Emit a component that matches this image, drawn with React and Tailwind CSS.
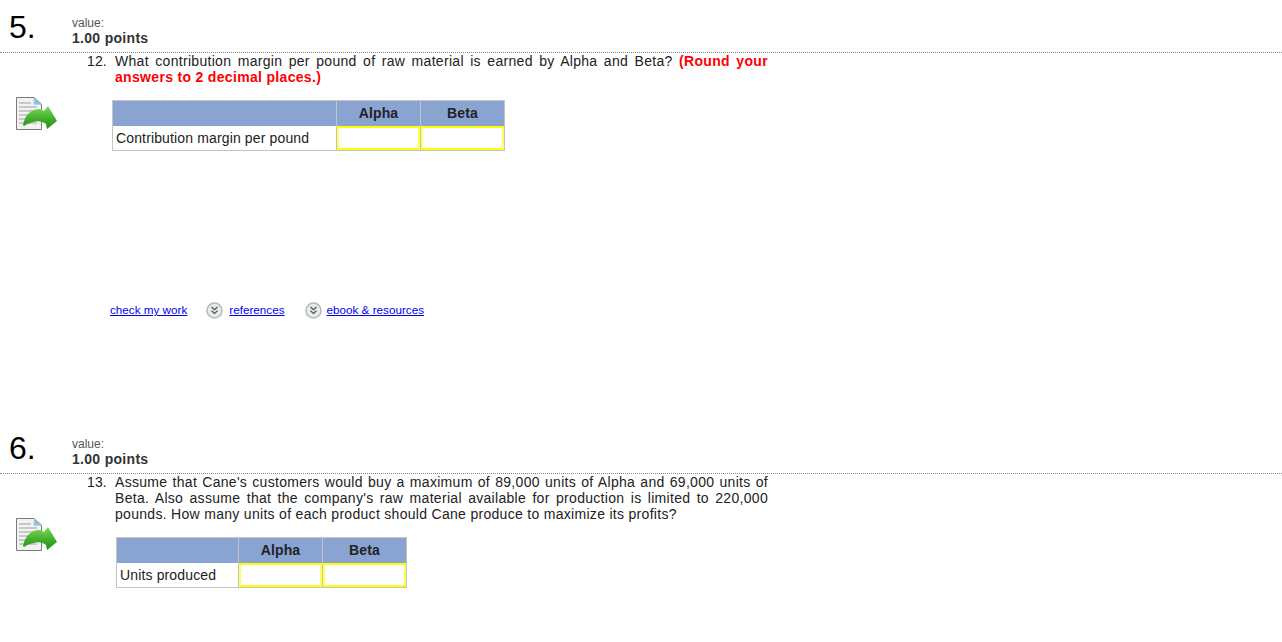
const FileIcon = () => (
  <svg width="42" height="34" viewBox="0 0 42 34" className="block">
    <defs>
      <linearGradient id="arrowFill" x1="0" y1="0" x2="0" y2="1">
        <stop offset="0" stopColor="#7fd858" />
        <stop offset="0.55" stopColor="#42b02c" />
        <stop offset="1" stopColor="#1f8f1c" />
      </linearGradient>
    </defs>
    <path d="M0.5 0.5H18L25.5 7V32.5H0.5Z" fill="#f2f2f2" stroke="#7a7a7a" />
    <path d="M18 0.5L25.5 7.5H18Z" fill="#8fc0ea" stroke="#a9c4d8" strokeWidth="0.5" />
    <path d="M3 6H15M3 10H21M3 14H21M3 18H21M3 22H21M3 26H21" stroke="#c8c8c8" strokeWidth="2" />
    <path d="M7 28C9 18 15 12 24 12L28 14L32 9L41 24L31 32L30 27C27 25 24 24 20 24.5C15 25 11 27 8 29Z" fill="url(#arrowFill)" />
  </svg>
);

const ExpandIcon = () => (
  <svg width="17" height="17" viewBox="0 0 17 17" className="block">
    <circle cx="8.5" cy="8.5" r="7.5" fill="#e9ecea" stroke="#b4b9b6" strokeWidth="1.5" />
    <path d="M5.5 5L8.5 7.7L11.5 5M5.5 8.7L8.5 11.4L11.5 8.7" fill="none" stroke="#4a5a55" strokeWidth="1.3" />
  </svg>
);

const AnswerTable = ({ label, wide }) => (
  <div className={`grid border-t border-[#c4c4c4] ${wide ? "grid-cols-[225px_84px_84px] w-[393px] ml-[25px]" : "grid-cols-[123px_84px_84px] w-[291px] ml-[29px]"} mt-[15px]`}>
    <div className="h-[25px] bg-[#8aa4d2] border-l border-r border-[#c4c4c4]" />
    <div className="h-[25px] pb-[1px] bg-[#8aa4d2] border-r border-[#c4c4c4] flex items-center justify-center font-bold text-[#222]">Alpha</div>
    <div className="h-[25px] pb-[1px] bg-[#8aa4d2] border-r border-[#c4c4c4] flex items-center justify-center font-bold text-[#222]">Beta</div>
    <div className="h-[25px] border-l border-r border-b border-[#c4c4c4] pl-[3px] flex items-center text-[#222]">{label}</div>
    <div className="h-[25px] border-r border-b border-[#c4c4c4]">
      <div className="h-full border-2 border-y-[#ffff00] border-x-[#ffff55]" />
    </div>
    <div className="h-[25px] border-r border-b border-[#c4c4c4]">
      <div className="h-full border-2 border-y-[#ffff00] border-x-[#ffff55]" />
    </div>
  </div>
);

const QuestionHeader = ({ num }) => (
  <div className="h-[53px] border-b border-dotted border-[#888] flex">
    <div className="w-[72px] pl-[9px] pt-[7px] text-[32px] leading-[40px] text-black tracking-normal">{num}.</div>
    <div className="pt-[16px]">
      <div className="text-[12px] leading-[14px] text-[#555] tracking-normal">value:</div>
      <div className="text-[14px] leading-[16px] font-bold text-[#333] tracking-[0.3px]">1.00 points</div>
    </div>
  </div>
);

const LinkText = ({ children }) => (
  <a href="#" className="text-[11.7px] leading-[14px] text-[#0000ee] underline tracking-normal">{children}</a>
);

export default function App() {
  return (
    <div className="w-[1282px] h-[642px] bg-white overflow-hidden text-[14px] leading-[16px] tracking-[0.14px]" style={{ fontFamily: '"Liberation Sans", Arial, sans-serif' }}>
      <section className="h-[421px]">
        <QuestionHeader num="5" />
        <div className="flex">
          <div className="w-[87px] pl-[16px] pt-[44px] shrink-0"><FileIcon /></div>
          <div>
            <div className="flex text-[#222]">
              <span className="w-[28px]">12.</span>
              <p className="w-[653px] text-justify tracking-[0.3px]">
                What contribution margin per pound of raw material is earned by Alpha and Beta?{" "}
                <span className="font-bold text-[#ff0000] tracking-[0.32px]">(Round your answers to 2 decimal places.)</span>
              </p>
            </div>
            <AnswerTable label="Contribution margin per pound" wide />
            <div className="ml-[23px] mt-[150px] flex items-center h-[18px]">
              <LinkText>check my work</LinkText>
              <span className="ml-[19px] mr-[6px]"><ExpandIcon /></span>
              <LinkText>references</LinkText>
              <span className="ml-[20px] mr-[5px]"><ExpandIcon /></span>
              <LinkText>ebook &amp; resources</LinkText>
            </div>
          </div>
        </div>
      </section>
      <section>
        <QuestionHeader num="6" />
        <div className="flex">
          <div className="w-[87px] pl-[16px] pt-[44px] shrink-0"><FileIcon /></div>
          <div>
            <div className="flex text-[#222]">
              <span className="w-[28px]">13.</span>
              <p className="w-[653px] text-justify tracking-[0.3px]">
                Assume that Cane's customers would buy a maximum of 89,000 units of Alpha and 69,000 units of Beta. Also assume that the company's raw material available for production is limited to 220,000 pounds. How many units of each product should Cane produce to maximize its profits?
              </p>
            </div>
            <AnswerTable label="Units produced" />
          </div>
        </div>
      </section>
    </div>
  );
}
